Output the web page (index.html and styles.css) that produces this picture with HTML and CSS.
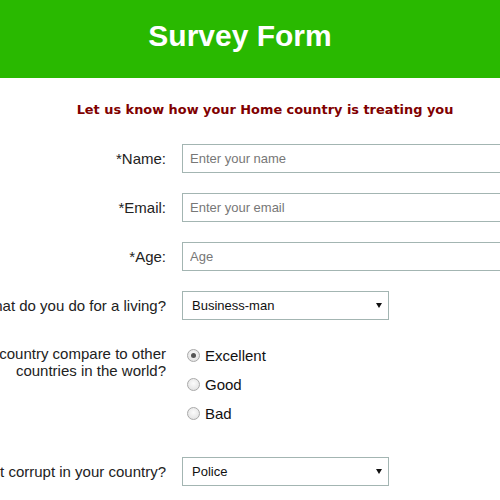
FILE: index.html
```html
<!DOCTYPE html>
<html>
<head>
<meta charset="utf-8">
<link rel="stylesheet" href="styles.css">
</head>
<body>
<header class="banner"><h1 class="title">Survey Form</h1></header>
<p class="subtitle">Let us know how your Home country is treating you</p>
<form class="form">
  <div class="row">
    <label class="label" for="name">*Name:</label>
    <input class="field" id="name" type="text" placeholder="Enter your name">
  </div>
  <div class="row">
    <label class="label" for="email">*Email:</label>
    <input class="field" id="email" type="email" placeholder="Enter your email">
  </div>
  <div class="row">
    <label class="label" for="age">*Age:</label>
    <input class="field" id="age" type="number" placeholder="Age">
  </div>
  <div class="row">
    <label class="label" for="job">What do you do for a living?</label>
    <div class="select-wrap">
      <select class="select" id="job"><option>Business-man</option></select>
      <svg class="arrow" width="6" height="5" viewBox="0 0 6 5"><path d="M0 0H6L3 5Z" fill="#111"/></svg>
    </div>
  </div>
  <div class="row row-top">
    <div class="label label-multi">How does your country compare to other<br>countries in the world?</div>
    <div class="radios">
      <label class="radio"><input class="radio-input" type="radio" name="cmp" checked>Excellent</label>
      <label class="radio"><input class="radio-input" type="radio" name="cmp">Good</label>
      <label class="radio"><input class="radio-input" type="radio" name="cmp">Bad</label>
    </div>
  </div>
  <div class="row">
    <label class="label" for="corrupt">What is most corrupt in your country?</label>
    <div class="select-wrap">
      <select class="select" id="corrupt"><option>Police</option></select>
      <svg class="arrow" width="6" height="5" viewBox="0 0 6 5"><path d="M0 0H6L3 5Z" fill="#111"/></svg>
    </div>
  </div>
</form>
</body>
</html>
```
FILE: styles.css
```css
html, body {
  margin: 0;
  padding: 0;
  overflow: hidden;
}
body {
  font-family: "Liberation Sans", Arial, sans-serif;
  color: #222;
  background: #fff;
}
.banner {
  box-sizing: border-box;
  height: 78px;
  background: #29b900;
  display: flex;
  align-items: center;
  justify-content: center;
  padding: 0 20px 6px 0;
}
.title {
  margin: 0;
  font-size: 30px;
  font-weight: bold;
  color: #fff;
  line-height: 1;
}
.subtitle {
  margin: 22px 0 0;
  padding-left: 30px;
  height: 20px;
  line-height: 20px;
  text-align: center;
  font-family: "DejaVu Sans", sans-serif;
  font-weight: bold;
  font-size: 12.9px;
  color: #800000;
}
.form {
  padding-top: 24px;
  display: flex;
  flex-direction: column;
  gap: 20px;
}
.row {
  display: grid;
  grid-template-columns: 166px 420px;
  column-gap: 16px;
  align-items: center;
}
.row-top {
  align-items: start;
  margin-bottom: 9px;
}
.label {
  display: flex;
  justify-content: flex-end;
  white-space: nowrap;
  font-size: 15px;
  text-align: right;
  color: #222;
}
.label-multi {
  padding-top: 5px;
  line-height: 17px;
}
.field {
  box-sizing: border-box;
  height: 29px;
  width: 420px;
  border: 1px solid #a3b5b2;
  padding: 0 7px;
  font-family: "Liberation Sans", Arial, sans-serif;
  font-size: 13px;
  outline: none;
  margin: 0;
}
.field::placeholder {
  color: #777;
}
.select-wrap {
  position: relative;
  width: 207px;
  height: 29px;
}
.select {
  appearance: none;
  -webkit-appearance: none;
  box-sizing: border-box;
  width: 207px;
  height: 29px;
  margin: 0;
  border: 1px solid #a3b5b2;
  border-radius: 0;
  background: #fff;
  padding: 0 9px;
  font-family: "Liberation Sans", Arial, sans-serif;
  font-size: 13px;
  color: #111;
}
.arrow {
  position: absolute;
  right: 7px;
  top: 12px;
}
.radios {
  display: flex;
  flex-direction: column;
  padding-top: 1px;
}
.radio {
  height: 29px;
  display: flex;
  align-items: center;
  font-size: 15px;
  color: #111;
}
.radio-input {
  appearance: none;
  -webkit-appearance: none;
  box-sizing: border-box;
  width: 13px;
  height: 13px;
  margin: 0 5px 0 5px;
  border: 1px solid #a9a9a9;
  border-radius: 50%;
  background: radial-gradient(circle at 50% 40%, #fbfbfb 0%, #e6e6e6 70%, #d8d8d8 100%);
  position: relative;
}
.radio-input:checked::after {
  content: "";
  position: absolute;
  left: 3px;
  top: 3px;
  width: 5px;
  height: 5px;
  border-radius: 50%;
  background: #555;
}
```
